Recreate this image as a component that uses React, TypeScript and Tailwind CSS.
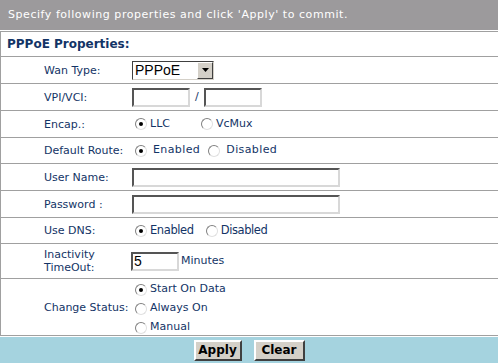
import React from 'react';

const LINE = 'border-[#a0a0a0]';

function Radio({ checked = false }: { checked?: boolean }) {
  return (
    <span className="inline-flex items-center justify-center w-[12px] h-[12px] rounded-full border border-t-[#808080] border-l-[#808080] border-b-[#e0e0e0] border-r-[#e0e0e0] bg-white shrink-0">
      {checked && <span className="block w-[4px] h-[4px] rounded-full bg-black" />}
    </span>
  );
}

function TextBox({ w, value = '' }: { w: string; value?: string }) {
  return (
    <div
      className={`${w} h-[19px] border-2 border-t-[#555] border-l-[#555] border-b-[#d8d8d8] border-r-[#d8d8d8] bg-white text-[14px] leading-[15px] text-black pl-px font-['Liberation_Sans',sans-serif]`}
    >
      {value}
    </div>
  );
}

function Row({ label, h, children }: { label: React.ReactNode; h: string; children: React.ReactNode }) {
  return (
    <div className={`flex items-center border-b ${LINE} ${h}`}>
      <div className="w-[130px] pl-[43px] shrink-0 leading-[13px]">{label}</div>
      <div className="flex-1 flex items-center">{children}</div>
    </div>
  );
}

function Choice({ checked, label, className = '' }: { checked?: boolean; label: string; className?: string }) {
  return (
    <span className={`flex items-center gap-[3px] ${className}`}>
      <Radio checked={checked} />
      <span>{label}</span>
    </span>
  );
}

export default function App() {
  return (
    <div className="w-[498px] h-[363px] bg-white overflow-hidden text-[11px] text-[#133466] font-['DejaVu_Sans',Verdana,sans-serif]">
      <div className="h-[30px] bg-[#9c9a9c] text-white text-[11px] tracking-[0.55px] flex items-center pl-[8px]">
        Specify following properties and click 'Apply' to commit.
      </div>
      <div className={`mt-px border-t border-l ${LINE}`}>
        <div className={`h-[25px] border-b ${LINE} flex items-center pl-[6px] font-bold text-[12px]`}>
          PPPoE Properties:
        </div>

        <Row label="Wan Type:" h="h-[27px]">
          <div className="ml-px w-[82px] h-[19px] flex border border-t-[#404040] border-l-[#404040] border-b-[#d4d0c8] border-r-[#d4d0c8] bg-white">
            <span className="flex-1 pl-[2px] text-[14px] leading-[17px] text-black font-['Liberation_Sans',sans-serif]">PPPoE</span>
            <span className="w-[16px] h-full bg-[#d4d0c8] border border-t-white border-l-white border-b-[#404040] border-r-[#404040] flex items-center justify-center">
              <svg width="7" height="4" viewBox="0 0 7 4"><path d="M0 0h7L3.5 4z" fill="#000" /></svg>
            </span>
          </div>
        </Row>

        <Row label="VPI/VCI:" h="h-[27px]">
          <div className="ml-px flex items-center">
            <TextBox w="w-[58px]" />
            <span className="mx-[5px]">/</span>
            <TextBox w="w-[58px]" />
          </div>
        </Row>

        <Row label="Encap.:" h="h-[27px]">
          <Choice checked label="LLC" className="ml-[4px]" />
          <Choice label="VcMux" className="ml-[31px]" />
        </Row>

        <Row label="Default Route:" h="h-[26px]">
          <div className="flex items-center tracking-[0.4px]">
            <Choice checked label="Enabled" className="ml-[4px] gap-[6px]" />
            <Choice label="Disabled" className="ml-[8px] gap-[6px]" />
          </div>
        </Row>

        <Row label="User Name:" h="h-[27px]">
          <TextBox w="ml-px w-[208px]" />
        </Row>

        <Row label="Password :" h="h-[27px]">
          <TextBox w="ml-px w-[208px]" />
        </Row>

        <Row label="Use DNS:" h="h-[26px]">
          <div className="flex items-center text-[11.5px] tracking-[-0.4px]">
            <Choice checked label="Enabled" className="ml-[4px]" />
            <Choice label="Disabled" className="ml-[12px]" />
          </div>
        </Row>

        <Row label={<>Inactivity<br />TimeOut:</>} h="h-[35px]">
          <TextBox w="w-[48px]" value="5" />
          <span className="ml-[2px]">Minutes</span>
        </Row>

        <Row label="Change Status:" h="h-[57px]">
          <div className="flex flex-col pt-[3px] ml-[4px]">
            <Choice checked label="Start On Data" className="h-[19px]" />
            <Choice label="Always On" className="h-[19px]" />
            <Choice label="Manual" className="h-[19px]" />
          </div>
        </Row>
      </div>
      <div className="mt-px h-[26px] bg-[#a5d3df] flex items-center justify-center gap-[12px]">
        <button className="w-[48px] h-[21px] bg-[#d4d0c8] border-2 border-t-white border-l-white border-b-[#404040] border-r-[#404040] text-black font-bold text-[12px] leading-none">
          Apply
        </button>
        <button className="w-[51px] h-[21px] bg-[#d4d0c8] border-2 border-t-white border-l-white border-b-[#404040] border-r-[#404040] text-black font-bold text-[12px] leading-none">
          Clear
        </button>
      </div>
    </div>
  );
}
